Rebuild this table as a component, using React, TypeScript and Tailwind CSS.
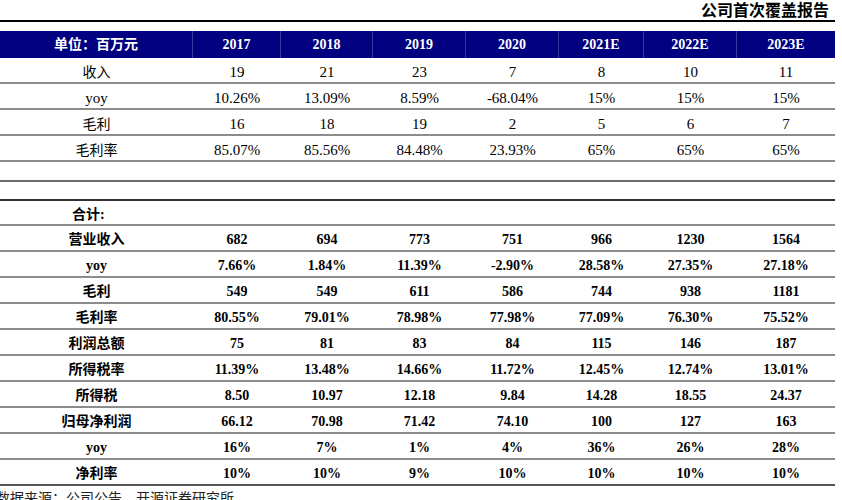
import React from "react"

const cols = "grid grid-cols-[193px_88px_92px_93px_93px_85px_93px_98px]"

const years = ["2017", "2018", "2019", "2020", "2021E", "2022E", "2023E"]

type Row = { label: string; values: string[] }

const topRows: Row[] = [
  { label: "收入", values: ["19", "21", "23", "7", "8", "10", "11"] },
  { label: "yoy", values: ["10.26%", "13.09%", "8.59%", "-68.04%", "15%", "15%", "15%"] },
  { label: "毛利", values: ["16", "18", "19", "2", "5", "6", "7"] },
  { label: "毛利率", values: ["85.07%", "85.56%", "84.48%", "23.93%", "65%", "65%", "65%"] },
]

const totalRows: Row[] = [
  { label: "营业收入", values: ["682", "694", "773", "751", "966", "1230", "1564"] },
  { label: "yoy", values: ["7.66%", "1.84%", "11.39%", "-2.90%", "28.58%", "27.35%", "27.18%"] },
  { label: "毛利", values: ["549", "549", "611", "586", "744", "938", "1181"] },
  { label: "毛利率", values: ["80.55%", "79.01%", "78.98%", "77.98%", "77.09%", "76.30%", "75.52%"] },
  { label: "利润总额", values: ["75", "81", "83", "84", "115", "146", "187"] },
  { label: "所得税率", values: ["11.39%", "13.48%", "14.66%", "11.72%", "12.45%", "12.74%", "13.01%"] },
  { label: "所得税", values: ["8.50", "10.97", "12.18", "9.84", "14.28", "18.55", "24.37"] },
  { label: "归母净利润", values: ["66.12", "70.98", "71.42", "74.10", "100", "127", "163"] },
  { label: "yoy", values: ["16%", "7%", "1%", "4%", "36%", "26%", "28%"] },
  { label: "净利率", values: ["10%", "10%", "9%", "10%", "10%", "10%", "10%"] },
]

function DataRow({ row, bold, last }: { row: Row; bold?: boolean; last?: boolean }) {
  const isLatin = row.label === "yoy"
  return (
    <div
      className={`${cols} items-center text-center pt-[3px] border-b-2 ${
        last ? "border-[#555]" : "border-[#8c8c8c]"
      } ${bold ? "h-[26px] font-bold text-[14px]" : "h-[26px] text-[15px]"}`}
    >
      <div className={isLatin ? "" : "text-[14px]"}>{row.label}</div>
      {row.values.map((v, i) => (
        <div key={i}>{v}</div>
      ))}
    </div>
  )
}

export default function App() {
  return (
    <div className="w-[842px] h-[500px] overflow-hidden bg-white text-black font-['Liberation_Serif','Noto_Sans_CJK_SC',serif]">
      <div className="w-[835px] h-[22px] border-b-2 border-black flex items-end justify-end pr-[6px] pb-[1px]">
        <span className="text-[16px] font-bold leading-none">公司首次覆盖报告</span>
      </div>

      <div className="w-[835px] mt-[9px]">
        <div className={`${cols} h-[27px] bg-[#000080] text-white font-bold text-[14px] items-stretch`}>
          <div className="flex items-center justify-center border-r border-[#3a3a9c]">单位：百万元</div>
          {years.map((y, i) => (
            <div
              key={y}
              className={`flex items-center justify-center ${i < years.length - 1 ? "border-r border-[#3a3a9c]" : ""}`}
            >
              {y}
            </div>
          ))}
        </div>

        {topRows.map((r) => (
          <DataRow key={r.label} row={r} />
        ))}

        <div className="h-[20px] border-b-2 border-[#6a6a6a]" />
        <div className="h-[19px] border-b-2 border-[#333]" />

        <div className="h-[25px] border-b-2 border-[#8c8c8c] flex items-center pt-[3px] pl-[72px] font-bold text-[14px]">
          合计:
        </div>

        {totalRows.map((r, i) => (
          <DataRow key={r.label + i} row={r} bold last={i === totalRows.length - 1} />
        ))}
      </div>

      <div className="-ml-[4px] mt-[6px] text-[14px] leading-none text-[#222]">
        数据来源：公司公告、开源证券研究所
      </div>
    </div>
  )
}
